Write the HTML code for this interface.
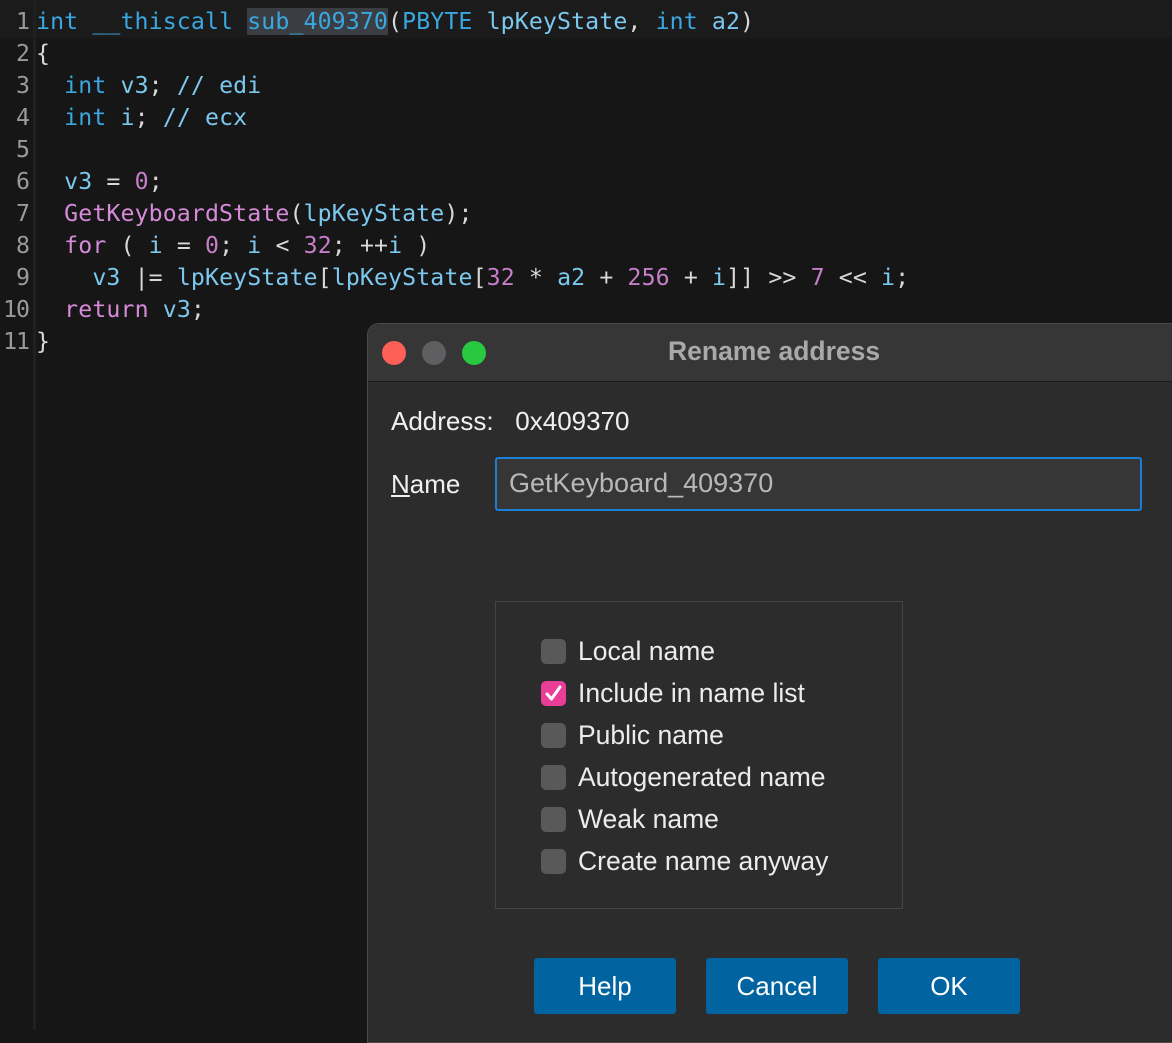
<!DOCTYPE html><html><head><style>
body{margin:0;width:1172px;height:1030px;background:#161617;overflow:hidden;position:relative;font-family:"Liberation Sans",sans-serif}
.top{position:absolute;left:0;top:0;width:1172px;height:38px;background:#1b1b1c}
.gut{position:absolute;left:33px;top:0;width:3px;height:1030px;background:#202021}
.code{position:absolute;left:0;top:6px;font-family:"DejaVu Sans Mono","Liberation Mono",monospace;font-size:23.2px;line-height:32px;color:#cfd6e0;white-space:pre;letter-spacing:0.12px}
.ln{display:inline-block;width:29px;text-align:right;color:#9a9a9a;margin-right:7px;letter-spacing:-1px}
.k{color:#3aa8e0}.v{color:#7cc8ee}.p{color:#d68ad8}.n{color:#c77ec9}.w{color:#d8d8d8}
.hl{background:#3a3d42}
.dlg{position:absolute;left:367px;top:323px;width:820px;height:720px;background:#2c2c2c;border-radius:12px 0 0 0;border:1px solid #4a4a4a;box-sizing:border-box}
.tb{height:57px;background:#363636;border-bottom:1px solid #1a1a1a;border-radius:12px 0 0 0;position:relative}
.dot{position:absolute;top:17px;width:24px;height:24px;border-radius:50%}
.tt{position:absolute;left:300px;top:12px;font-size:26.5px;font-weight:bold;color:#a9a9a9}
.t{position:absolute;color:#f0f0f0;font-size:26px}
.inp{position:absolute;left:127px;top:133px;width:647px;height:54px;border:2px solid #1a7fd4;border-radius:3px;background:#363636;box-sizing:border-box;color:#b8b8b8;font-size:27px;padding:9px 12px}
.grp{position:absolute;left:127px;top:277px;width:408px;height:308px;border:1px solid #444;box-sizing:border-box}
.cb{position:absolute;left:45px;width:25px;height:25px;border-radius:5px;background:#595959}
.cl{position:absolute;left:82px;font-size:26.5px;color:#ececec}
.btn{position:absolute;top:634px;width:142px;height:56px;background:#0163a0;border-radius:3px;color:#fff;font-size:26px;text-align:center;line-height:56px}
</style></head><body>
<div class="top"></div><div class="gut"></div>
<div class="code"><span class="ln">1</span><span class="k">int __thiscall </span><span class="k hl">sub_409370</span><span class="w">(</span><span class="k">PBYTE </span><span class="v">lpKeyState</span><span class="w">, </span><span class="k">int </span><span class="v">a2</span><span class="w">)</span>
<span class="ln">2</span><span class="w">{</span>
<span class="ln">3</span>  <span class="k">int </span><span class="v">v3</span><span class="w">; </span><span class="v">// edi</span>
<span class="ln">4</span>  <span class="k">int </span><span class="v">i</span><span class="w">; </span><span class="v">// ecx</span>
<span class="ln">5</span>
<span class="ln">6</span>  <span class="v">v3</span><span class="w"> = </span><span class="n">0</span><span class="w">;</span>
<span class="ln">7</span>  <span class="p">GetKeyboardState</span><span class="w">(</span><span class="v">lpKeyState</span><span class="w">);</span>
<span class="ln">8</span>  <span class="p">for</span><span class="w"> ( </span><span class="v">i</span><span class="w"> = </span><span class="n">0</span><span class="w">; </span><span class="v">i</span><span class="w"> &lt; </span><span class="n">32</span><span class="w">; ++</span><span class="v">i</span><span class="w"> )</span>
<span class="ln">9</span>    <span class="v">v3</span><span class="w"> |= </span><span class="v">lpKeyState</span><span class="w">[</span><span class="v">lpKeyState</span><span class="w">[</span><span class="n">32</span><span class="w"> * </span><span class="v">a2</span><span class="w"> + </span><span class="n">256</span><span class="w"> + </span><span class="v">i</span><span class="w">]] &gt;&gt; </span><span class="n">7</span><span class="w"> &lt;&lt; </span><span class="v">i</span><span class="w">;</span>
<span class="ln">10</span>  <span class="p">return </span><span class="v">v3</span><span class="w">;</span>
<span class="ln">11</span><span class="w">}</span></div>
<div class="dlg">
<div class="tb"><div class="dot" style="left:14px;background:#fe5f57"></div><div class="dot" style="left:54px;background:#5f5f62"></div><div class="dot" style="left:94px;background:#28c840"></div><div class="tt">Rename address</div></div>
<div class="t" style="left:23px;top:82px">Address:&nbsp;&nbsp; 0x409370</div>
<div class="t" style="left:23px;top:145px"><u>N</u>ame</div>
<div class="inp">GetKeyboard_409370</div>
<div class="grp">
<div class="cb" style="top:37px"></div><div class="cl" style="top:34px">Local name</div>
<div class="cb" style="top:79px;background:#e83e97"><svg width="25" height="25" viewBox="0 0 25 25"><path d="M6 13 L10.5 18 L19 6" stroke="#fff" stroke-width="3" fill="none" stroke-linecap="round" stroke-linejoin="round"/></svg></div><div class="cl" style="top:76px">Include in name list</div>
<div class="cb" style="top:121px"></div><div class="cl" style="top:118px">Public name</div>
<div class="cb" style="top:163px"></div><div class="cl" style="top:160px">Autogenerated name</div>
<div class="cb" style="top:205px"></div><div class="cl" style="top:202px">Weak name</div>
<div class="cb" style="top:247px"></div><div class="cl" style="top:244px">Create name anyway</div>
</div>
<div class="btn" style="left:166px">Help</div>
<div class="btn" style="left:338px">Cancel</div>
<div class="btn" style="left:510px">OK</div>
</div>
</body></html>
